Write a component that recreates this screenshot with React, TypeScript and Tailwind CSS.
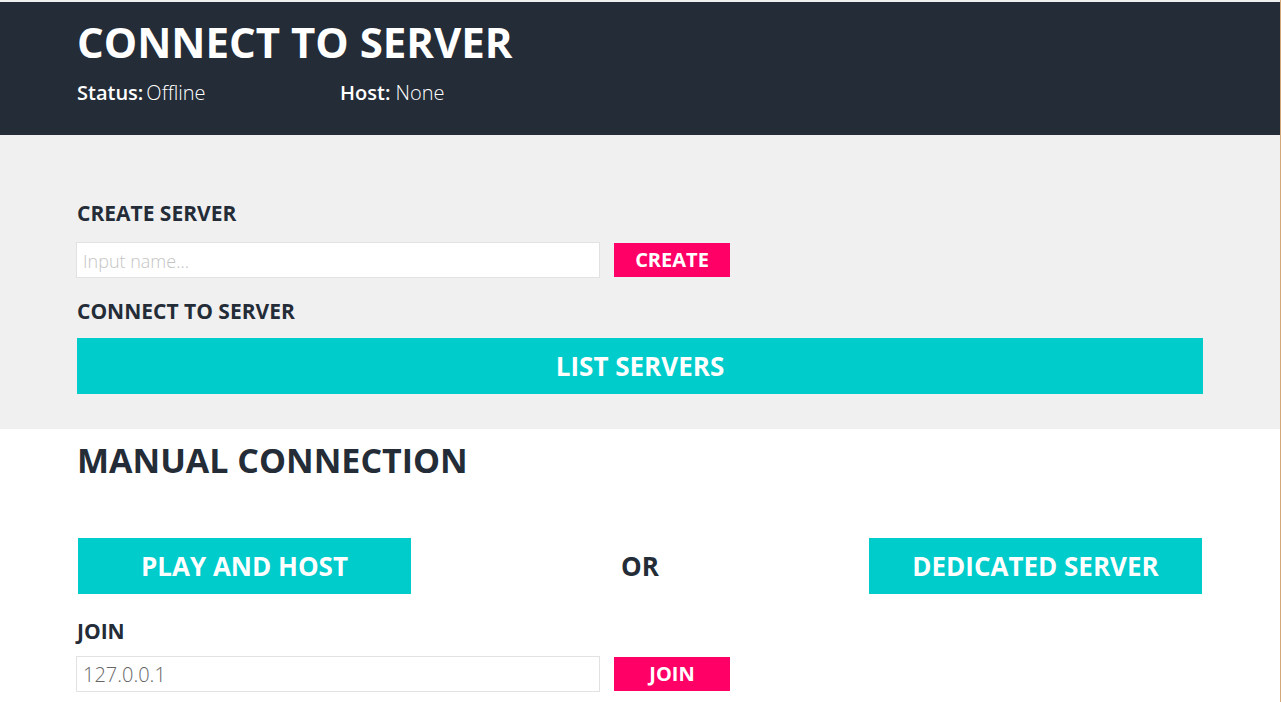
import { useState } from "react";

const font = { fontFamily: '"Open Sans", "Liberation Sans", sans-serif' };

function PinkButton({ text }: { text: string }) {
  return (
    <button className="h-[34px] w-[116px] bg-[#ff0066] text-[20px] font-bold leading-none text-white">
      {text}
    </button>
  );
}

function CyanButton({ text, className = "" }: { text: string; className?: string }) {
  return (
    <button
      className={`h-[56px] bg-[#00cccc] text-[26px] font-bold leading-none text-white ${className}`}
    >
      {text}
    </button>
  );
}

export default function App() {
  const [name, setName] = useState("");
  const [address, setAddress] = useState("127.0.0.1");

  return (
    <div className="min-h-[702px] w-full border-r border-[#d4a878] bg-white" style={font}>
      <header className="border-t-2 border-[#f0f0f0] bg-[#232c37] px-[77px] pt-[14px] pb-[28px] text-white">
        <h1 className="text-[42px] font-bold leading-[52px]">CONNECT TO SERVER</h1>
        <div className="mt-[11px] flex text-[20px] leading-[28px]">
          <div className="w-[263px]">
            <span className="font-semibold">Status:</span>
            <span className="ml-[3px] font-light">Offline</span>
          </div>
          <div>
            <span className="font-semibold">Host:</span>{" "}
            <span className="font-light">None</span>
          </div>
        </div>
      </header>

      <section className="bg-[#f0f0f0] px-[77px] pt-[64px] pb-[35px] text-[#232c37]">
        <h2 className="text-[21px] font-bold leading-[28px]">CREATE SERVER</h2>
        <div className="mt-[15px] flex items-center gap-[14px]">
          <input
            value={name}
            onChange={(e) => setName(e.target.value)}
            placeholder="Input name..."
            className="-ml-px h-[36px] w-[524px] border border-[#e2e2e2] bg-white px-[6px] text-[20px] font-light text-[#666] outline-none placeholder:text-[18px] placeholder:text-[#c4c4c4]"
          />
          <PinkButton text="CREATE" />
        </div>
        <h2 className="mt-[19px] text-[21px] font-bold leading-[28px]">CONNECT TO SERVER</h2>
        <CyanButton text="LIST SERVERS" className="mt-[13px] w-full" />
      </section>

      <section className="px-[77px] pt-[8px] text-[#232c37]">
        <h2 className="text-[34px] font-bold leading-[46px]">MANUAL CONNECTION</h2>
        <div className="mt-[55px] flex items-center justify-between">
          <CyanButton text="PLAY AND HOST" className="ml-[1px] w-[333px]" />
          <span className="text-[26px] font-bold">OR</span>
          <CyanButton text="DEDICATED SERVER" className="mr-[1px] w-[333px]" />
        </div>
        <h2 className="mt-[23px] text-[21px] font-bold leading-[28px]">JOIN</h2>
        <div className="mt-[11px] flex items-center gap-[14px]">
          <input
            value={address}
            onChange={(e) => setAddress(e.target.value)}
            className="-ml-px h-[36px] w-[524px] border border-[#e2e2e2] bg-white px-[6px] text-[20px] font-light text-[#666] outline-none"
          />
          <PinkButton text="JOIN" />
        </div>
      </section>
    </div>
  );
}
